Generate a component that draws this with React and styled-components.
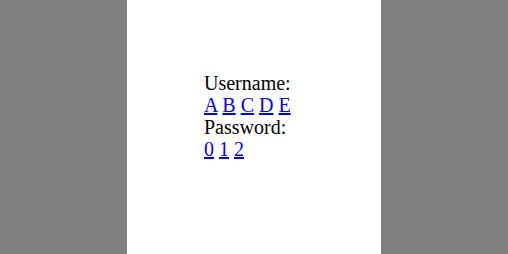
import React from "react";
import styled, { createGlobalStyle } from "styled-components";

const Global = createGlobalStyle`
  html, body { margin: 0; padding: 0; height: 100%; background: #808080; }
  #root { height: 100%; }
`;

const Page = styled.div`
  display: flex;
  justify-content: center;
  height: 254px;
  background: #808080;
`;

const Panel = styled.div`
  width: 254px;
  height: 100%;
  background: #ffffff;
  box-sizing: border-box;
  padding: 72px 0 0 77px;
  font-family: "Liberation Serif", "Times New Roman", serif;
  font-size: 20px;
  line-height: 22px;
  color: #000;
`;

const Label = styled.div``;

const Row = styled.div``;

const Key = styled.a`
  color: #0000ee;
  text-decoration: underline;
  cursor: pointer;
`;

const LinkRow = ({ items }) => (
  <Row>
    {items.map((k, i) => (
      <React.Fragment key={k}>
        {i > 0 && " "}
        <Key href="#">{k}</Key>
      </React.Fragment>
    ))}
  </Row>
);

export default function App() {
  return (
    <>
      <Global />
      <Page>
        <Panel>
          <Label>Username:</Label>
          <LinkRow items={["A", "B", "C", "D", "E"]} />
          <Label>Password:</Label>
          <LinkRow items={["0", "1", "2"]} />
        </Panel>
      </Page>
    </>
  );
}
